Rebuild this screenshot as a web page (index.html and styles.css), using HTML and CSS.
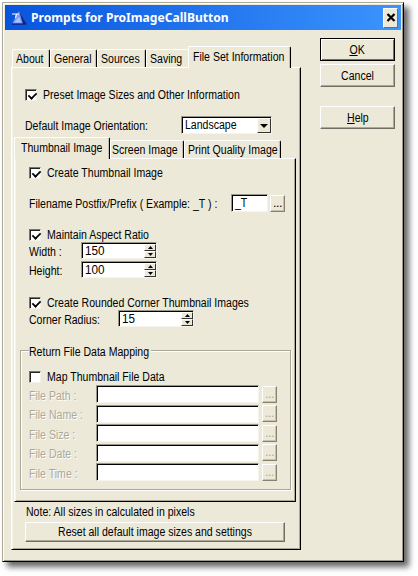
FILE: index.html
```html
<!DOCTYPE html>
<html lang="en">
<head>
<meta charset="utf-8">
<title>Prompts for ProImageCallButton</title>
<link rel="stylesheet" href="styles.css">
</head>
<body>
<div class="window">
  <header class="titlebar">
    <svg class="logo" width="16" height="16" viewBox="0 0 16 16"><path d="M8 1L15 14H1Z" fill="#7c98f4"/><path d="M8 1L15.500 14H12Z" fill="#18247c"/><path d="M1 14h14.500" stroke="#101a70" stroke-width="1.200"/><path d="M3 12.500h7L8 7Z" fill="#a8c4ff"/><path d="M1 4H8M5.500 4L4.500 8" stroke="#fff" stroke-width="1.200" fill="none"/></svg>
    <h1>Prompts for ProImageCallButton</h1>
    <button class="close"><svg width="10" height="9" viewBox="0 0 10 9"><path d="M1.500 1L8.500 8M8.500 1L1.500 8" stroke="#000" stroke-width="2.200"/></svg></button>
  </header>
  <div class="body">
    <main class="sheet">
      <nav class="tabs">
        <div class="tab about"><span>About</span></div><div class="tab general"><span>General</span></div><div class="tab sources"><span>Sources</span></div><div class="tab saving"><span>Saving</span></div><div class="tab active fileset"><span>File Set Information</span></div>
      </nav>
      <section class="panel outer">
        <div class="row preset"><i class="check on"></i><span>Preset Image Sizes and Other Information</span></div>
        <div class="row orient"><span class="t-orient">Default Image Orientation:</span>
          <div class="field combo"><span>Landscape</span><i class="drop"><svg width="8" height="4" viewBox="0 0 8 4"><path d="M0 0h8L4 4Z"/></svg></i></div></div>
        <nav class="tabs inner-tabs">
          <div class="tab active thumb"><span>Thumbnail Image</span></div><div class="tab screen"><span>Screen Image</span></div><div class="tab print"><span>Print Quality Image</span></div>
        </nav>
        <section class="panel inner">
          <div class="row create"><i class="check on"></i><span>Create Thumbnail Image</span></div>
          <div class="row postfix"><span class="t-postfix">Filename Postfix/Prefix ( Example: _T ) :</span><div class="field short"><span>_T</span></div><button class="dots">...</button></div>
          <div class="row aspect"><i class="check on"></i><span>Maintain Aspect Ratio</span></div>
          <div class="row size"><span class="lab">Width :</span><div class="field spin"><span class="num">150</span><i class="arrows"><b><svg width="5" height="3" viewBox="0 0 5 3"><path d="M0 3L2.500 0L5 3Z"/></svg></b><b><svg width="5" height="3" viewBox="0 0 5 3"><path d="M0 0L2.500 3L5 0Z"/></svg></b></i></div></div>
          <div class="row size"><span class="lab">Height:</span><div class="field spin"><span class="num">100</span><i class="arrows"><b><svg width="5" height="3" viewBox="0 0 5 3"><path d="M0 3L2.500 0L5 3Z"/></svg></b><b><svg width="5" height="3" viewBox="0 0 5 3"><path d="M0 0L2.500 3L5 0Z"/></svg></b></i></div></div>
          <div class="row rounded"><i class="check on"></i><span>Create Rounded Corner Thumbnail Images</span></div>
          <div class="row radius"><span class="lab">Corner Radius:</span><div class="field spin"><span class="num">15</span><i class="arrows"><b><svg width="5" height="3" viewBox="0 0 5 3"><path d="M0 3L2.500 0L5 3Z"/></svg></b><b><svg width="5" height="3" viewBox="0 0 5 3"><path d="M0 0L2.500 3L5 0Z"/></svg></b></i></div></div>
          <div class="group">
            <h2><span>Return File Data Mapping</span></h2>
            <div class="row map"><i class="check"></i><span>Map Thumbnail File Data</span></div>
            <div class="files">
              <div class="row file"><span class="lab">File Path :</span><div class="field"></div><button class="dots" disabled>...</button></div>
              <div class="row file"><span class="lab">File Name :</span><div class="field"></div><button class="dots" disabled>...</button></div>
              <div class="row file"><span class="lab">File Size :</span><div class="field"></div><button class="dots" disabled>...</button></div>
              <div class="row file"><span class="lab">File Date :</span><div class="field"></div><button class="dots" disabled>...</button></div>
              <div class="row file"><span class="lab">File Time :</span><div class="field"></div><button class="dots" disabled>...</button></div>
            </div>
          </div>
        </section>
        <p class="note"><span>Note: All sizes in calculated in pixels</span></p>
        <button class="btn reset"><span>Reset all default image sizes and settings</span></button>
      </section>
    </main>
    <aside class="actions">
      <button class="btn ok"><span><u>O</u>K</span></button>
      <button class="btn"><span>Cancel</span></button>
      <button class="btn help"><span><u>H</u>elp</span></button>
    </aside>
  </div>
</div>
</body>
</html>
```
FILE: styles.css
```css
* { box-sizing: border-box; }
body {
  margin: 0; padding: 2px; width: 418px; height: 576px; overflow: hidden; background: #fff;
  font: 12.5px/16px "Liberation Sans", sans-serif; color: #000;
}
h1, h2, p { margin: 0; font: inherit; }
i { font-style: normal; }
span { display: inline-block; transform: scaleX(.843); transform-origin: 0 50%; white-space: nowrap; }
button { font: inherit; color: inherit; padding: 0; margin: 0; white-space: nowrap; }
.window {
  width: 402px; height: 560px; padding: 1px; background: #ece9d8;
  border: 1px solid; border-color: #aca899 #000 #000 #aca899;
  box-shadow: inset 1px 1px #fff, inset -1px -1px #9d9a8b, 5px 5px 6px rgba(0,0,0,.6);
}
.titlebar {
  height: 25px; margin: 1px 1px 0; display: flex; align-items: center;
  background: linear-gradient(90deg, #0855dd, #3c94fd); color: #fff;
}
.logo { margin-left: 6px; flex: none; }
.titlebar h1 { margin-left: 4px; font: bold 13px/25px "Noto Sans", sans-serif; white-space: nowrap; transform: scaleX(.93); transform-origin: 0 50%; }
.close {
  margin: 0 3px 0 auto; width: 15px; height: 20px; background: #ece9d8; display: flex; align-items: center; justify-content: center;
  border: 1px solid; border-color: #fff #716f64 #716f64 #fff;
}
.body { display: flex; padding-left: 7px; }
.sheet { width: 290px; padding-top: 16px; }
.tabs { display: flex; align-items: flex-end; height: 21px; padding-left: 1px; }
.tab {
  flex: none; height: 18px; padding: 1px 0 0 3px; border-top: 1px solid #fff; border-left: 1px solid #fff; border-right: 1px solid #000;
  border-radius: 2px 2px 0 0; box-shadow: inset -1px 0 #c5c2b2;
}
.tab.active { height: 22px; margin-bottom: -1px; padding-top: 2px; background: #ece9d8; z-index: 1; }
.about { width: 38px; }
.general { width: 47px; }
.sources { width: 49px; }
.saving { width: 42px; border-right: 0; box-shadow: none; }
.fileset { width: 103px; padding-left: 4px; }
.panel {
  border: 1px solid; border-color: #fff #000 #000 #fff;
  box-shadow: inset 1px 0 #f6f4ea, inset -1px -1px #aca899;
}
.outer { height: 483px; padding: 20px 0 0 2px; }
.row { display: flex; align-items: center; }
.check {
  width: 12px; height: 12px; margin-right: 6px; background: #fff; flex: none;
  border: 1px solid; border-color: #77756a #f4f2e8 #f4f2e8 #77756a; box-shadow: inset 1px 1px #222;
}
.check.on::after { content: ""; display: block; width: 7px; height: 4px; margin: 2px 0 0 2px; border: solid #000; border-width: 0 0 2px 2px; transform: rotate(-45deg) scale(.9); }
.preset { height: 13px; padding-left: 11px; }
.orient { height: 18px; margin-top: 15px; padding-left: 11px; }
.t-orient { width: 156px; padding-top: 2px; }
.field {
  flex: none; height: 18px; background: #fff; border: 1px solid; border-color: #99968a #f6f4ec #f6f4ec #99968a;
  box-shadow: inset 1px 1px #000; padding-left: 3px; line-height: 17px; display: flex;
}
.combo { width: 91px; }
.combo span { width: 72px; }
.drop { width: 14px; margin: 1px 0 0; background: #ece9d8; display: flex; align-items: center; justify-content: center; border: 1px solid; border-color: #fff #333 #333 #fff; }
.inner-tabs { margin-top: 3px; height: 21px; padding: 0; }
.thumb { width: 96px; padding-left: 6px; }
.screen { width: 74px; padding-left: 1px; }
.print { width: 97px; padding-left: 3px; }
.inner { width: 282px; height: 344px; padding: 7px 0 0 5px; }
.create { height: 13px; padding-left: 9px; }
.postfix { height: 18px; margin-top: 15px; padding-left: 9px; }
.t-postfix { width: 202px; padding-top: 2px; }
.short { width: 37px; }
.dots { flex: none; width: 15px; height: 17px; line-height: 11px; margin-left: 2px; background: #ece9d8; border: 1px solid; border-color: #fff #85826f #85826f #fff; box-shadow: inset -1px -1px #c5c2b2; letter-spacing: -.4px; }
.aspect { height: 13px; margin-top: 16px; padding-left: 9px; }
.size { height: 17px; margin-top: 1px; padding-left: 9px; }
.size + .size { margin-top: 2px; }
.lab { padding-top: 3px; }
.size .lab { width: 52px; }
.spin { width: 76px; height: 17px; line-height: 15px; justify-content: space-between; }
.spin .num { font-size: 13px; transform: scaleX(.9); }
.arrows { width: 12px; margin-top: 1px; display: flex; flex-direction: column; }
.arrows b { flex: 1; display: flex; align-items: center; justify-content: center; background: #ece9d8; border: 1px solid; border-color: #fff #333 #333 #fff; }
.rounded { height: 13px; margin-top: 18px; padding-left: 9px; }
.radius { height: 17px; margin-top: 1px; padding-left: 9px; }
.radius .lab { width: 89px; }
.group { width: 271px; height: 140px; margin-top: 23px; border: 1px solid #aca899; box-shadow: 1px 1px #fff, inset 1px 1px #fff; }
.group h2 { width: 122px; height: 16px; margin: -8px 0 0 8px; padding-top: 1px; background: #ece9d8; }
.map { height: 13px; margin-top: 11px; padding-left: 8px; }
.files { margin-top: 2px; height: 96px; display: flex; flex-direction: column; justify-content: space-between; }
.file { height: 18px; padding-left: 8px; color: #aca899; text-shadow: 1px 1px #fff; }
.file .lab { width: 67px; }
.file .field { width: 163px; }
.file .dots { margin-left: 3px; }
.note { margin: 2px 0 0 12px; }
.btn { width: 75px; height: 23px; background: #ece9d8; border: 1px solid; border-color: #fff #716f64 #716f64 #fff; box-shadow: inset -1px -1px #aca899; display: flex; align-items: center; justify-content: center; }
.btn span { transform-origin: 50% 50%; }
.reset { width: 260px; height: 20px; margin: 2px 0 0 11px; }
.actions { margin-left: 19px; padding-top: 8px; }
.ok { border-color: #000; box-shadow: inset 1px 1px #fff, inset -1px -1px #716f64; margin-bottom: 3px; }
.help { margin-top: 19px; }
```
